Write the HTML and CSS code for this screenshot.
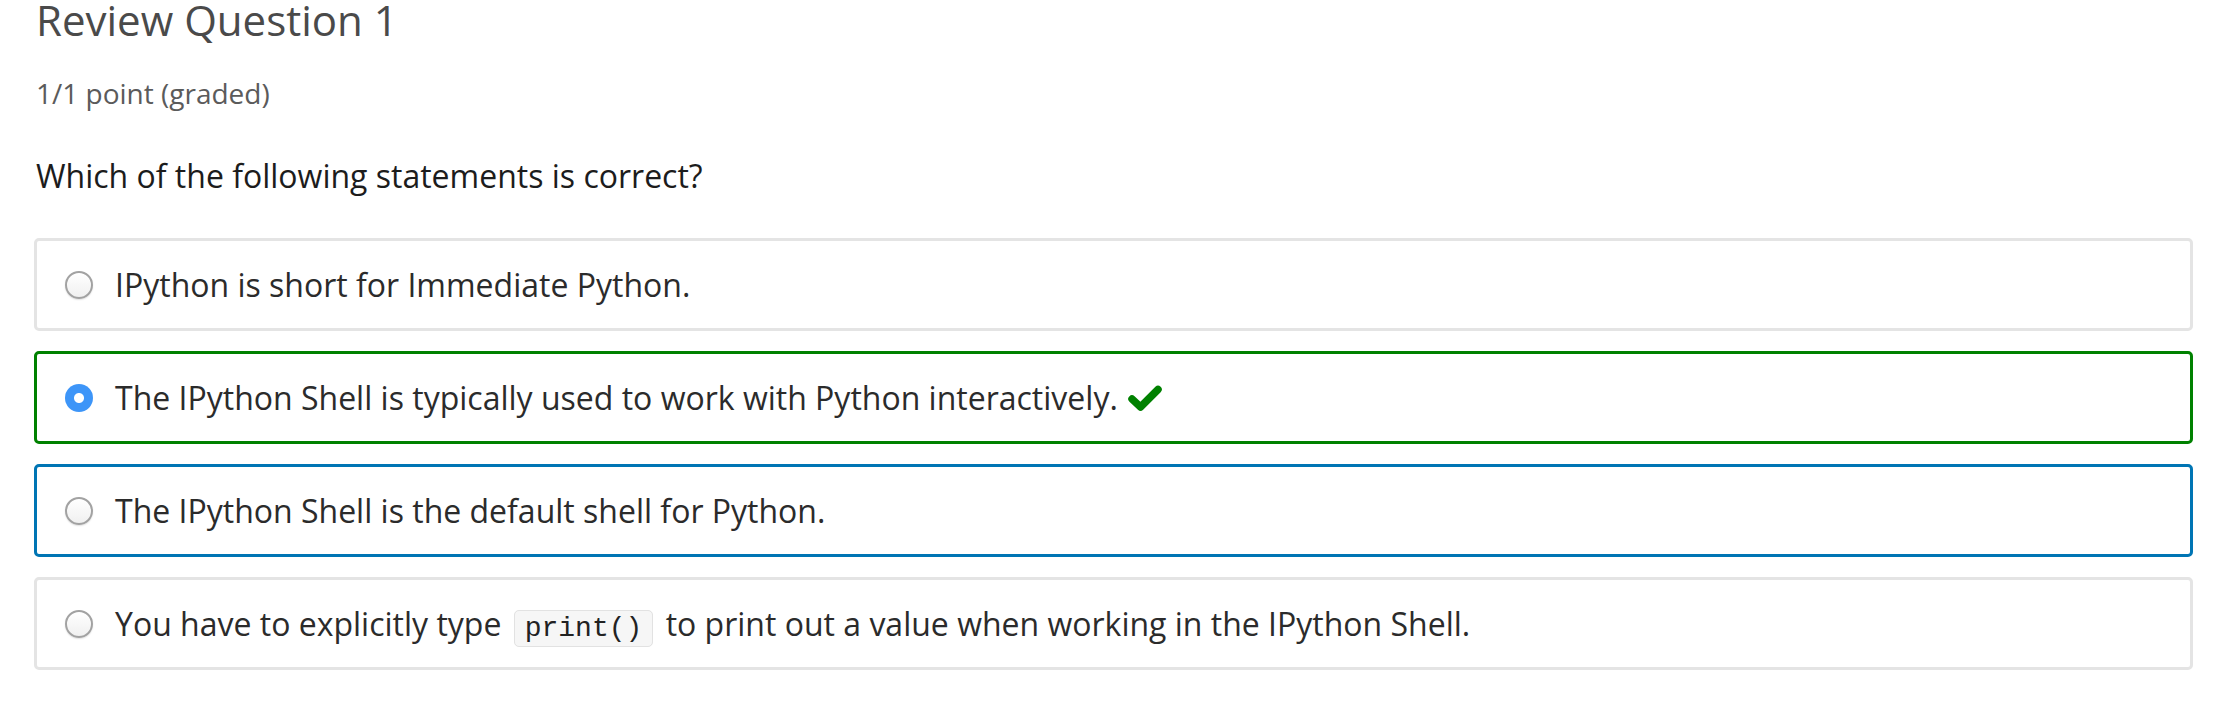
FILE: index.html
```html
<!DOCTYPE html>
<html>
<head>
<meta charset="utf-8">
<link rel="stylesheet" href="styles.css">
</head>
<body>
<div class="problem">
  <h2 class="title">Review Question 1</h2>
  <div class="points">1/1 point (graded)</div>
  <p class="question">Which of the following statements is correct?</p>
  <div class="choices">
    <label class="choice">
      <span class="radio"></span>
      <span class="text">IPython is short for Immediate Python.</span>
    </label>
    <label class="choice correct">
      <span class="radio checked"></span>
      <span class="text">The IPython Shell is typically used to work with Python interactively.</span>
      <svg class="check" viewBox="0 0 34 26" width="34" height="26"><path d="M4 14 L12.5 22 L30 4.5" fill="none" stroke="#008100" stroke-width="7.5" stroke-linecap="round" stroke-linejoin="round"/></svg>
    </label>
    <label class="choice focused">
      <span class="radio"></span>
      <span class="text">The IPython Shell is the default shell for Python.</span>
    </label>
    <label class="choice">
      <span class="radio"></span>
      <span class="text">You have to explicitly type <code class="code">print()</code> to print out a value when working in the IPython Shell.</span>
    </label>
  </div>
</div>
</body>
</html>
```
FILE: styles.css
```css
html, body {
  margin: 0;
  padding: 0;
  background: #ffffff;
}
body {
  font-family: "Open Sans", "Liberation Sans", sans-serif;
  color: #2b2b2b;
}
.problem {
  padding: 0 45px 0 34px;
}
.title {
  margin: 0;
  padding-left: 2px;
  font-size: 42px;
  font-weight: 400;
  line-height: 40px;
  color: #4a4a4a;
}
.points {
  margin-top: 35px;
  padding-left: 2px;
  font-size: 28px;
  line-height: 36px;
  color: #5b5b5b;
}
.question {
  margin: 45px 0 0 0;
  padding-left: 2px;
  font-size: 32px;
  line-height: 40px;
  color: #1c1c1c;
}
.choices {
  margin-top: 42px;
  display: flex;
  flex-direction: column;
  gap: 20px;
}
.choice {
  display: flex;
  align-items: center;
  height: 93px;
  box-sizing: border-box;
  border: 3px solid #e4e4e4;
  border-radius: 5px;
  padding-left: 28px;
  font-size: 32px;
}
.choice.correct {
  border-color: #008100;
}
.choice.focused {
  border-color: #0075b4;
}
.radio {
  width: 28px;
  height: 28px;
  border-radius: 50%;
  box-sizing: border-box;
  border: 2px solid #a2a2a2;
  background: linear-gradient(#ffffff, #f0f0f0);
  box-shadow: 0 1px 1.5px rgba(0,0,0,0.12);
  flex: none;
  margin-right: 22px;
}
.radio.checked {
  border: none;
  box-shadow: none;
  background: radial-gradient(circle, #ffffff 0 4.5px, #3d95f8 5.5px);
}
.text {
  white-space: nowrap;
}
.check {
  margin-left: 10px;
  flex: none;
}
.code {
  font-family: "Liberation Mono", "Courier New", monospace;
  font-size: 28px;
  background: #f6f6f6;
  border: 1.5px solid #e2e2e2;
  border-radius: 5px;
  padding: 2px 10px;
  margin: 0 4px;
  color: #222;
}
```
